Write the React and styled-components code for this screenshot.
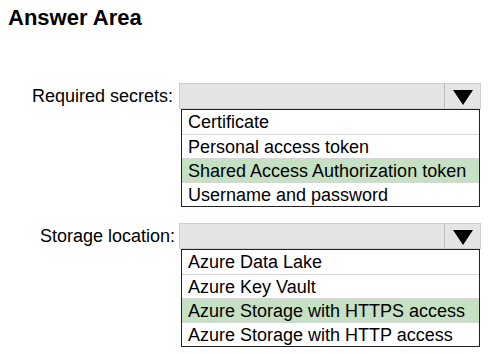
import React from 'react';
import styled, { createGlobalStyle } from 'styled-components';

const GlobalStyle = createGlobalStyle`
    html, body {
        margin: 0;
        padding: 0;
        background: #ffffff;
    }
    body {
        font-family: "Liberation Sans", Arial, sans-serif;
        color: #000000;
    }
`;

const Page = styled.div`
    width: 489px;
    height: 354px;
    padding: 5px 0 0 8px;
    box-sizing: border-box;
`;

const Title = styled.h1`
    margin: 0;
    font-size: 22px;
    line-height: 26px;
    font-weight: bold;
`;

const Group = styled.div`
    display: flex;
    align-items: flex-start;
    margin-top: ${props => props.top}px;
`;

const Label = styled.div`
    width: ${props => props.width}px;
    text-align: right;
    font-size: 18px;
    line-height: 26px;
    margin-right: ${props => props.gap}px;
`;

const Dropdown = styled.div`
    display: flex;
    flex-direction: column;
    width: 302px;
`;

const Header = styled.div`
    display: flex;
    height: 26px;
    background: #e4e4e4;
    border: 1px solid #cfcfcf;
    box-sizing: border-box;
`;

const HeaderField = styled.div`
    flex: 1;
`;

const ArrowCell = styled.div`
    width: 35px;
    border-left: 1px solid #bdbdbd;
    display: flex;
    align-items: center;
    justify-content: center;
`;

const Arrow = styled.div`
    width: 0;
    height: 0;
    border-left: 10px solid transparent;
    border-right: 10px solid transparent;
    border-top: 15px solid #000000;
    margin-top: 2px;
`;

const List = styled.div`
    margin-left: 2px;
    width: 299px;
    border: 1px solid #222222;
    box-sizing: border-box;
`;

const Option = styled.div`
    height: 24px;
    line-height: 24px;
    font-size: 18px;
    padding-left: 6px;
    white-space: nowrap;
    background: ${props => (props.selected ? '#c6e0c3' : '#ffffff')};
    border-top: ${props => (props.first ? 'none' : '1px solid #d6d6d6')};
    box-sizing: border-box;
`;

const groups = [
    {
        label: 'Required secrets:',
        top: 52,
        width: 165,
        gap: 6,
        options: ['Certificate', 'Personal access token', 'Shared Access Authorization token', 'Username and password'],
        selected: 2,
    },
    {
        label: 'Storage location:',
        top: 16,
        width: 167,
        gap: 4,
        options: ['Azure Data Lake', 'Azure Key Vault', 'Azure Storage with HTTPS access', 'Azure Storage with HTTP access'],
        selected: 2,
    },
];

export default function App() {
    return (
        <>
            <GlobalStyle />
            <Page>
                <Title>Answer Area</Title>
                {groups.map(g => (
                    <Group key={g.label} top={g.top}>
                        <Label width={g.width} gap={g.gap}>{g.label}</Label>
                        <Dropdown>
                            <Header>
                                <HeaderField />
                                <ArrowCell>
                                    <Arrow />
                                </ArrowCell>
                            </Header>
                            <List>
                                {g.options.map((opt, i) => (
                                    <Option key={opt} first={i === 0} selected={i === g.selected}>
                                        {opt}
                                    </Option>
                                ))}
                            </List>
                        </Dropdown>
                    </Group>
                ))}
            </Page>
        </>
    );
}
